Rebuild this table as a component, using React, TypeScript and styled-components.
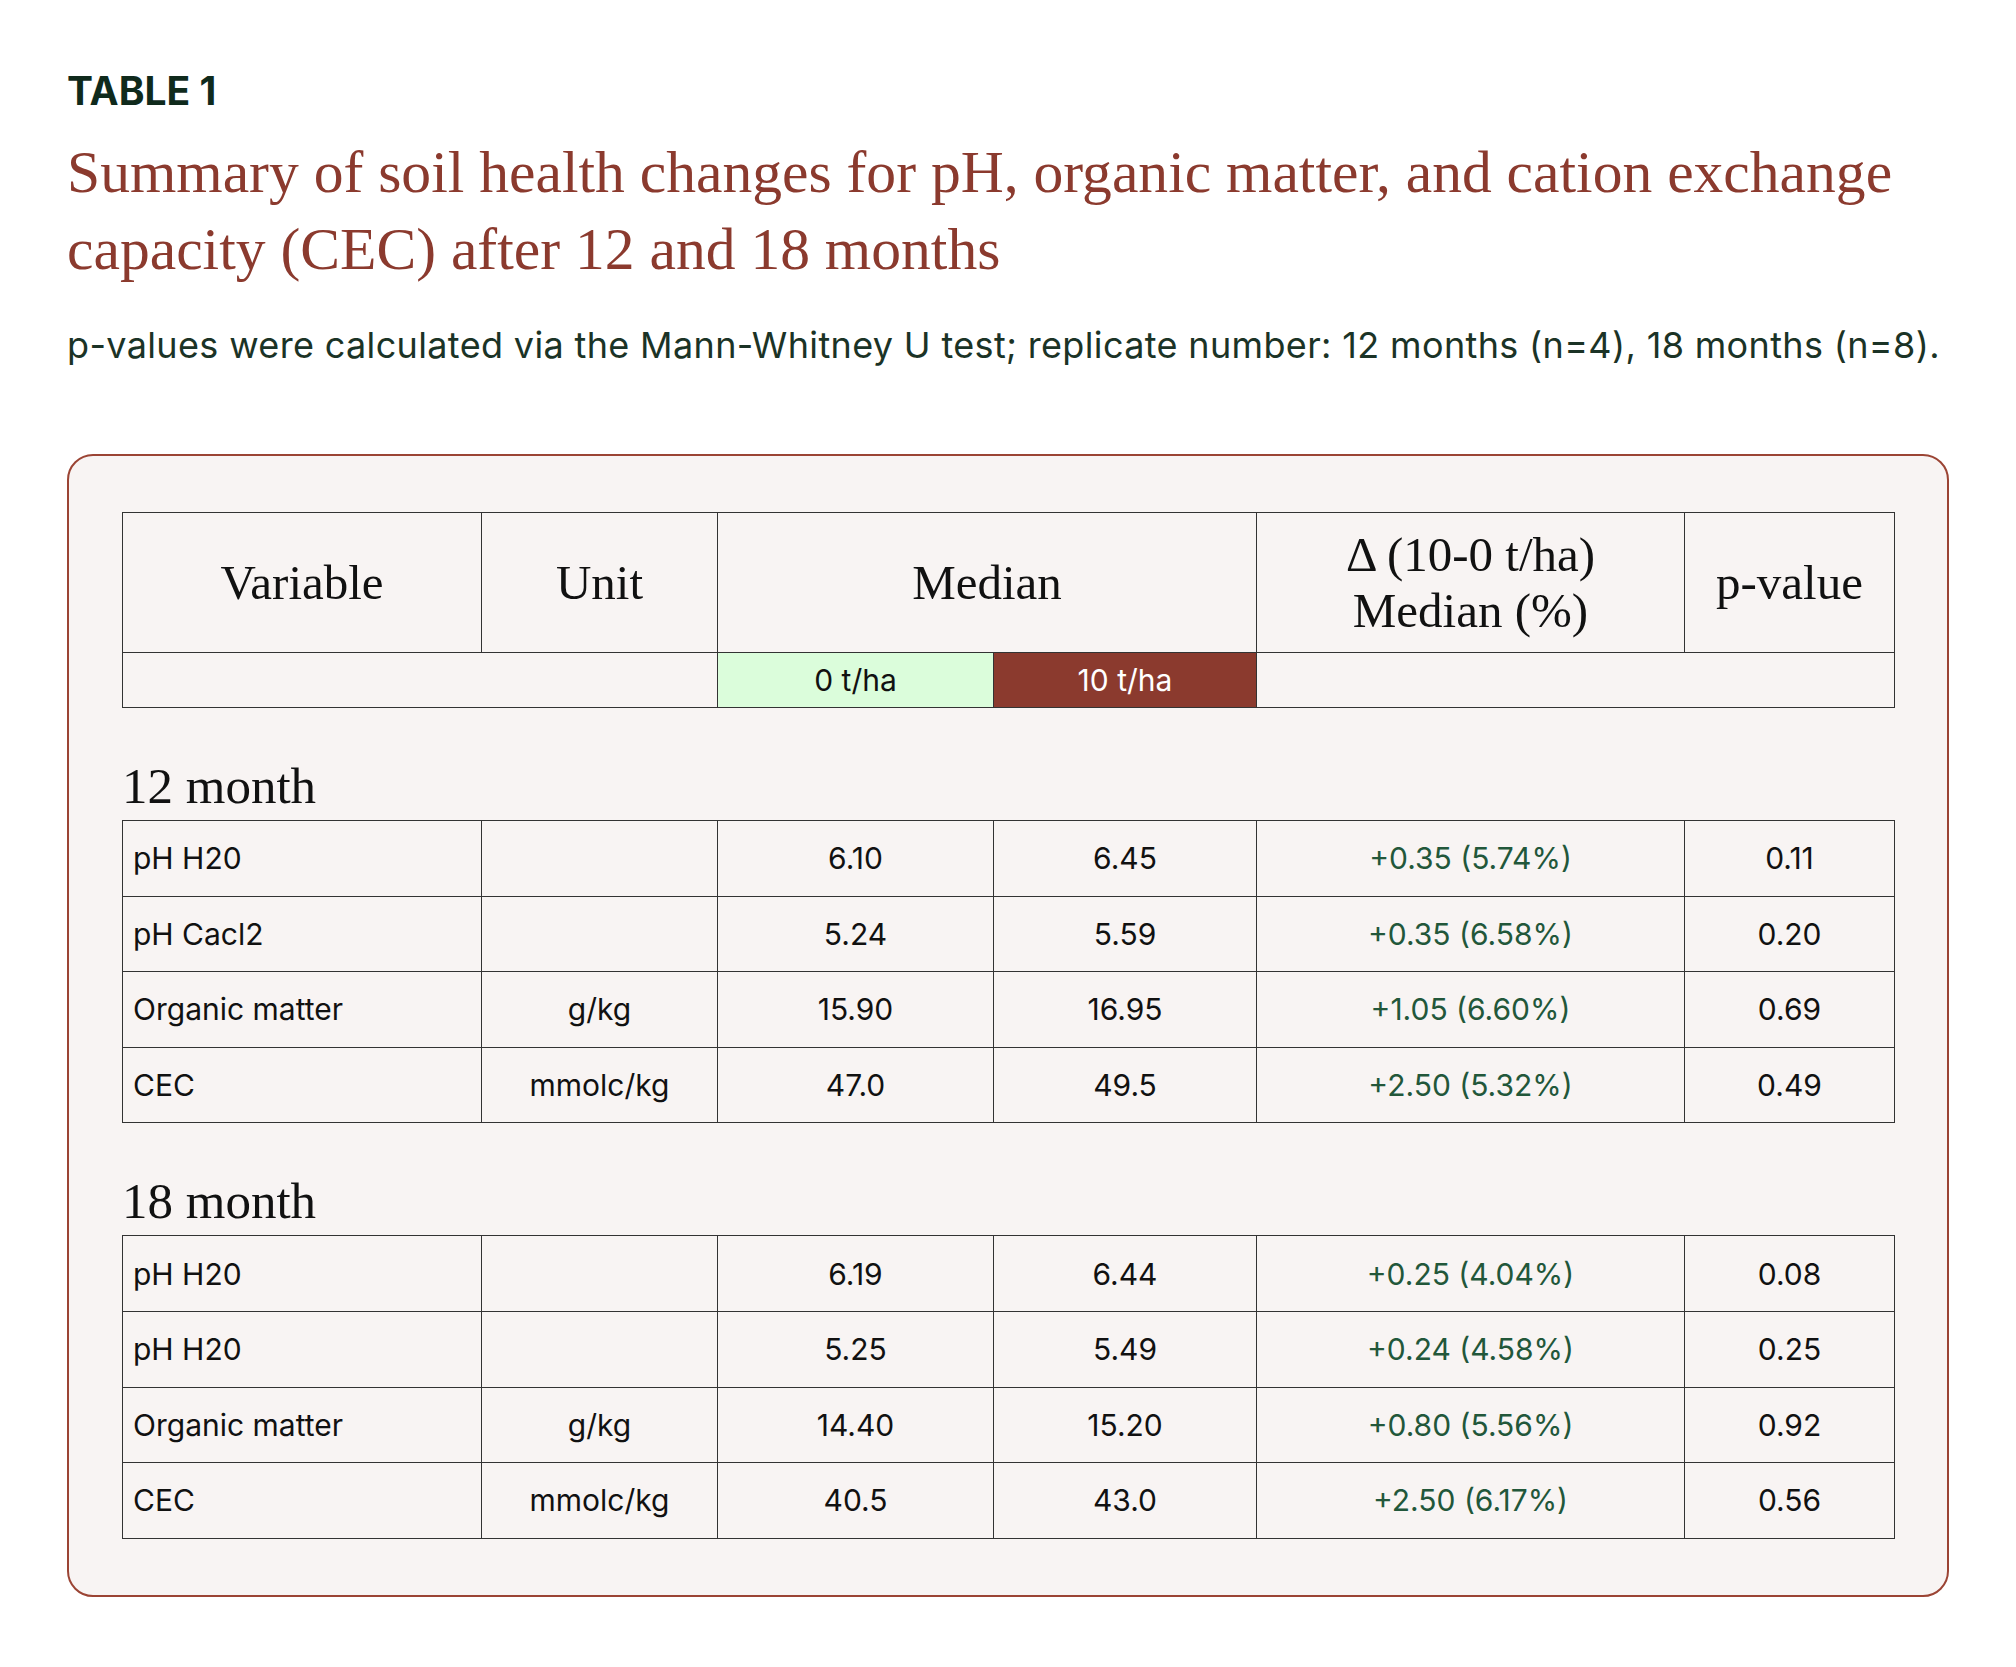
import styled, { createGlobalStyle } from "styled-components";

const GlobalStyle = createGlobalStyle`
  html, body {
    margin: 0;
    padding: 0;
    background: #ffffff;
  }

  body {
    font-family: Inter, "Noto Sans", sans-serif;
    color: #111111;
  }
`;

const COLUMNS = [359, 236, 276, 263, 428, 210];

const SERIF = `"Liberation Serif", "DejaVu Serif", serif`;
const SANS = `Inter, "Noto Sans", sans-serif`;

type Row = {
  variable: string;
  unit: string;
  control: string;
  treated: string;
  delta: string;
  p: string;
};

const SECTIONS: { label: string; rows: Row[] }[] = [
  {
    label: "12 month",
    rows: [
      { variable: "pH H20", unit: "", control: "6.10", treated: "6.45", delta: "+0.35 (5.74%)", p: "0.11" },
      { variable: "pH Cacl2", unit: "", control: "5.24", treated: "5.59", delta: "+0.35 (6.58%)", p: "0.20" },
      { variable: "Organic matter", unit: "g/kg", control: "15.90", treated: "16.95", delta: "+1.05 (6.60%)", p: "0.69" },
      { variable: "CEC", unit: "mmolc/kg", control: "47.0", treated: "49.5", delta: "+2.50 (5.32%)", p: "0.49" },
    ],
  },
  {
    label: "18 month",
    rows: [
      { variable: "pH H20", unit: "", control: "6.19", treated: "6.44", delta: "+0.25 (4.04%)", p: "0.08" },
      { variable: "pH H20", unit: "", control: "5.25", treated: "5.49", delta: "+0.24 (4.58%)", p: "0.25" },
      { variable: "Organic matter", unit: "g/kg", control: "14.40", treated: "15.20", delta: "+0.80 (5.56%)", p: "0.92" },
      { variable: "CEC", unit: "mmolc/kg", control: "40.5", treated: "43.0", delta: "+2.50 (6.17%)", p: "0.56" },
    ],
  },
];

const Page = styled.main`
  padding: 68px 67px 64px;
`;

const Eyebrow = styled.div`
  font-family: ${SANS};
  font-size: 39px;
  font-weight: 700;
  line-height: 46px;
  color: #0f2a1c;
`;

const Title = styled.h1`
  margin: 20px 0 0;
  font-family: ${SERIF};
  font-size: 59.6px;
  font-weight: 400;
  line-height: 77px;
  color: #8b3a2e;
`;

const Subtitle = styled.p`
  margin: 37px 0 0;
  font-family: ${SANS};
  font-size: 36px;
  letter-spacing: 0.35px;
  line-height: 41px;
  color: #1b3326;
`;

const Card = styled.section`
  margin-top: 88px;
  padding: 56px 52px 56px 53px;
  background: #f8f4f3;
  border: 2px solid #9b4434;
  border-radius: 26px;
`;

const Table = styled.table`
  width: 100%;
  table-layout: fixed;
  border-collapse: collapse;
`;

const HeadCell = styled.th`
  height: 139px;
  padding: 0 8px;
  border: 1.5px solid #333333;
  font-family: ${SERIF};
  font-size: 49px;
  font-weight: 400;
  line-height: 56px;
  color: #111111;
  text-align: center;
  vertical-align: middle;
`;

const DoseCell = styled.td<{ $tone?: "control" | "treated" }>`
  height: 54px;
  padding: 0;
  border: 1.5px solid #333333;
  font-family: ${SANS};
  font-size: 30px;
  text-align: center;
  vertical-align: middle;
  background: ${({ $tone }) =>
    $tone === "control" ? "#dbfddb" : $tone === "treated" ? "#8b3a2e" : "transparent"};
  color: ${({ $tone }) => ($tone === "treated" ? "#ffffff" : "#111111")};
`;

const Section = styled.div`
  margin-top: 54px;
`;

const SectionLabel = styled.h2`
  margin: 0 0 10px;
  font-family: ${SERIF};
  font-size: 51px;
  font-weight: 400;
  line-height: 48px;
  color: #111111;
`;

const Cell = styled.td<{ $align?: "left" | "center"; $tone?: "delta" }>`
  height: 74.6px;
  padding: 0 10px;
  border: 1.5px solid #333333;
  font-family: ${SANS};
  font-size: 30px;
  text-align: ${({ $align }) => $align ?? "center"};
  vertical-align: middle;
  color: ${({ $tone }) => ($tone === "delta" ? "#22573a" : "#111111")};
`;

const Columns = () => (
  <colgroup>
    {COLUMNS.map((w, i) => (
      <col key={i} style={{ width: w }} />
    ))}
  </colgroup>
);

const DataTable = ({ rows }: { rows: Row[] }) => (
  <Table>
    <Columns />
    <tbody>
      {rows.map((r, i) => (
        <tr key={i}>
          <Cell $align="left">{r.variable}</Cell>
          <Cell>{r.unit}</Cell>
          <Cell>{r.control}</Cell>
          <Cell>{r.treated}</Cell>
          <Cell $tone="delta">{r.delta}</Cell>
          <Cell>{r.p}</Cell>
        </tr>
      ))}
    </tbody>
  </Table>
);

export default function App() {
  return (
    <>
      <GlobalStyle />
      <Page>
        <Eyebrow>TABLE 1</Eyebrow>
        <Title>
          Summary of soil health changes for pH, organic matter, and cation exchange capacity (CEC)
          after 12 and 18 months
        </Title>
        <Subtitle>
          p-values were calculated via the Mann-Whitney U test; replicate number: 12 months (n=4),
          18 months (n=8).
        </Subtitle>

        <Card>
          <Table>
            <Columns />
            <thead>
              <tr>
                <HeadCell>Variable</HeadCell>
                <HeadCell>Unit</HeadCell>
                <HeadCell colSpan={2}>Median</HeadCell>
                <HeadCell>
                  Δ (10-0 t/ha)
                  <br />
                  Median (%)
                </HeadCell>
                <HeadCell>p-value</HeadCell>
              </tr>
              <tr>
                <DoseCell colSpan={2} />
                <DoseCell $tone="control">0 t/ha</DoseCell>
                <DoseCell $tone="treated">10 t/ha</DoseCell>
                <DoseCell colSpan={2} />
              </tr>
            </thead>
          </Table>

          {SECTIONS.map((s) => (
            <Section key={s.label}>
              <SectionLabel>{s.label}</SectionLabel>
              <DataTable rows={s.rows} />
            </Section>
          ))}
        </Card>
      </Page>
    </>
  );
}
